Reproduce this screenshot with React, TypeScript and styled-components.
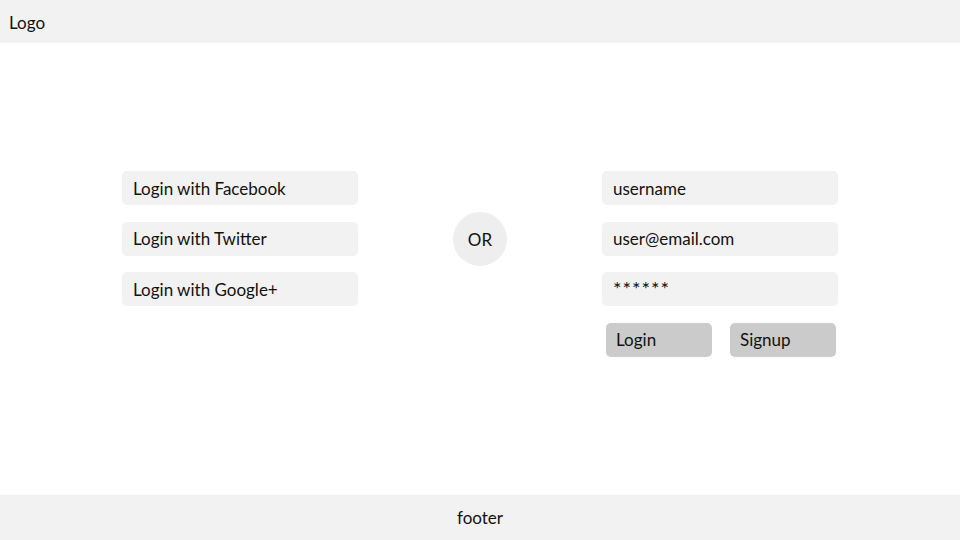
import React from "react";
import styled, { createGlobalStyle } from "styled-components";

const Global = createGlobalStyle`
  html, body { margin: 0; padding: 0; }
  body { font-family: Lato, "Open Sans", sans-serif; color: #111; background: #fff; }
  #root { width: 960px; height: 540px; }
`;

const Page = styled.div`
  width: 960px;
  height: 540px;
  display: flex;
  flex-direction: column;
`;

const Header = styled.header`
  height: 43px;
  background: #f2f2f2;
  display: flex;
  align-items: center;
  padding: 2px 0 0 9px;
  box-sizing: border-box;
  font-size: 17px;
`;

const Main = styled.main`
  flex: 1;
  display: flex;
  justify-content: center;
  align-items: flex-start;
  gap: 95px;
  padding-top: 128px;
`;

const Column = styled.div`
  width: 236px;
  display: flex;
  flex-direction: column;
  gap: 16.5px;
`;

const Field = styled.div<{ $secret?: boolean }>`
  height: 34px;
  background: #f2f2f2;
  border-radius: 5px;
  display: flex;
  align-items: center;
  padding-left: 11px;
  font-size: ${(p) => (p.$secret ? "20px" : "17px")};
  letter-spacing: ${(p) => (p.$secret ? "1px" : "0")};
  padding-bottom: ${(p) => (p.$secret ? "2px" : "0")};
  box-sizing: border-box;
`;

const Buttons = styled.div`
  display: flex;
  justify-content: space-between;
  padding: 0 2px 0 4px;
`;

const Button = styled.div`
  width: 106px;
  height: 34px;
  background: #cbcbcb;
  border-radius: 5px;
  display: flex;
  align-items: center;
  padding-left: 10px;
  box-sizing: border-box;
  font-size: 17px;
`;

const Or = styled.div`
  margin-top: 41px;
  width: 54px;
  height: 54px;
  border-radius: 50%;
  background: #eeeeee;
  display: flex;
  align-items: center;
  justify-content: center;
  font-size: 17px;
`;

const Footer = styled.footer`
  height: 45px;
  background: #f2f2f2;
  display: flex;
  align-items: center;
  justify-content: center;
  font-size: 17px;
`;

export default function App() {
  return (
    <Page>
      <Global />
      <Header>Logo</Header>
      <Main>
        <Column>
          <Field>Login with Facebook</Field>
          <Field>Login with Twitter</Field>
          <Field>Login with Google+</Field>
        </Column>
        <Or>OR</Or>
        <Column>
          <Field>username</Field>
          <Field>user@email.com</Field>
          <Field $secret>******</Field>
          <Buttons>
            <Button>Login</Button>
            <Button>Signup</Button>
          </Buttons>
        </Column>
      </Main>
      <Footer>footer</Footer>
    </Page>
  );
}
